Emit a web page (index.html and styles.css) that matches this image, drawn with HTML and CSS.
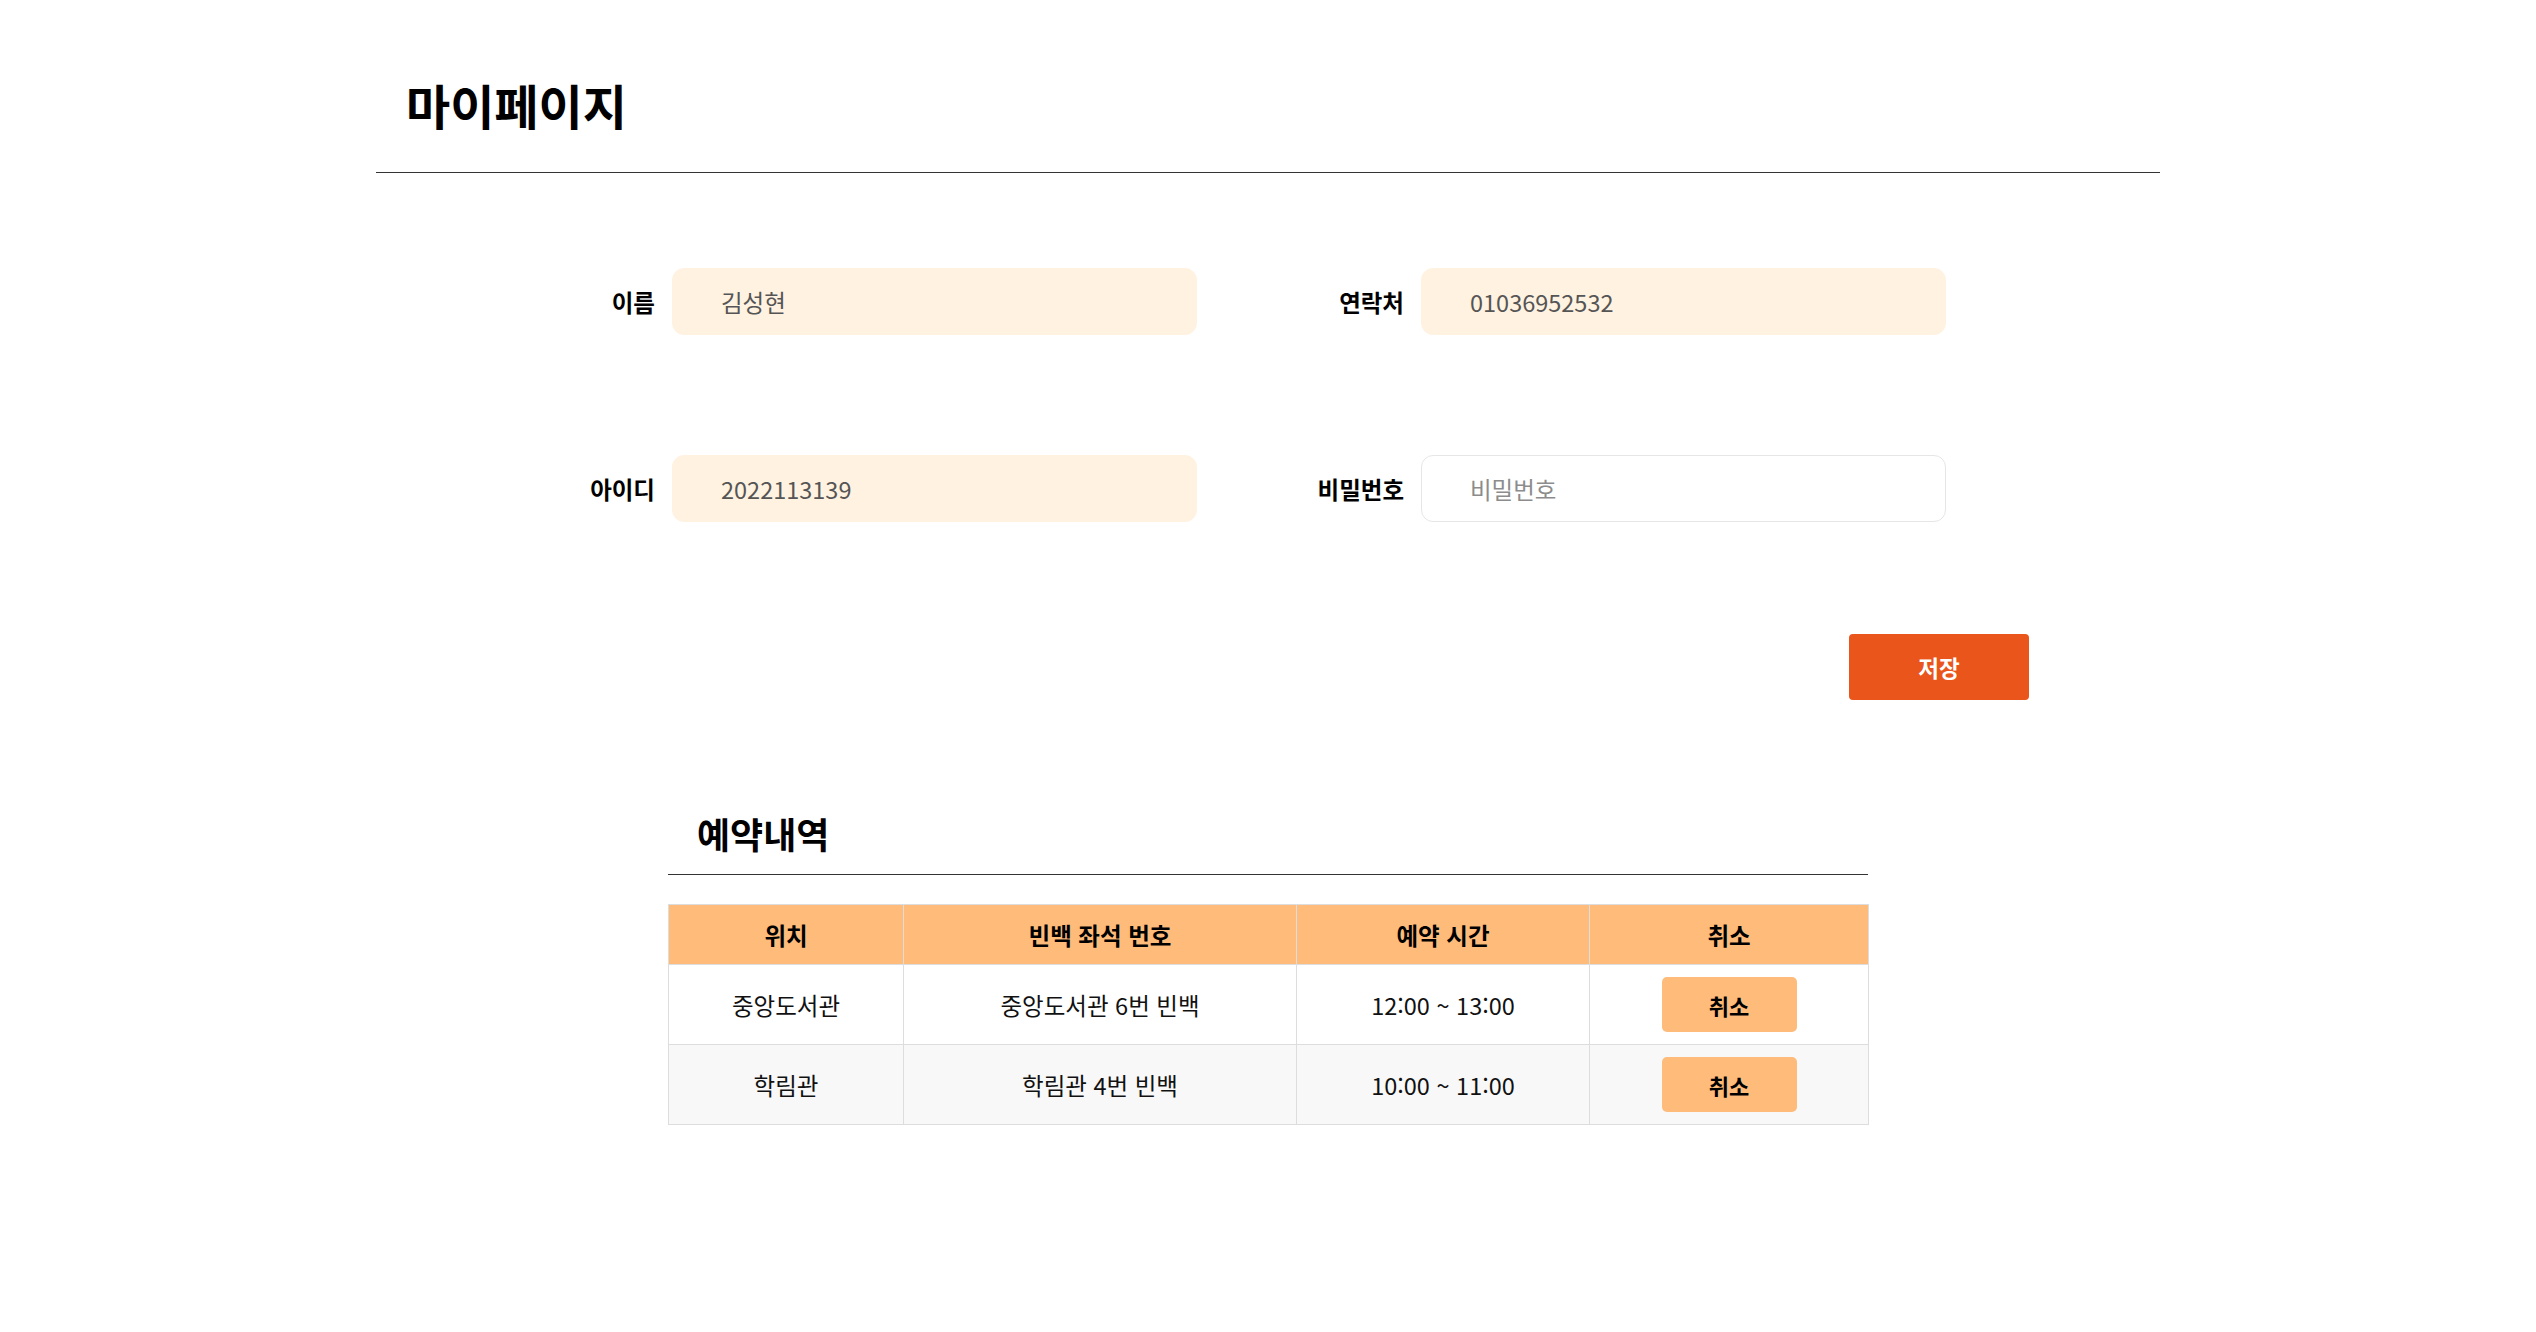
FILE: index.html
```html
<!DOCTYPE html>
<html lang="ko">
<head>
<meta charset="utf-8">
<title>마이페이지</title>
<link rel="stylesheet" href="styles.css">
</head>
<body>
<div class="page">
  <header class="page-header">
    <h1 class="page-title">마이페이지</h1>
  </header>

  <form class="profile-form">
    <div class="form-row">
      <div class="field">
        <label class="field-label">이름</label>
        <input class="field-input filled" type="text" value="김성현" readonly>
      </div>
      <div class="field">
        <label class="field-label">연락처</label>
        <input class="field-input filled" type="text" value="01036952532" readonly>
      </div>
    </div>
    <div class="form-row">
      <div class="field">
        <label class="field-label">아이디</label>
        <input class="field-input filled" type="text" value="2022113139" readonly>
      </div>
      <div class="field">
        <label class="field-label">비밀번호</label>
        <input class="field-input empty" type="password" placeholder="비밀번호">
      </div>
    </div>
    <div class="actions">
      <button class="save-btn" type="button">저장</button>
    </div>
  </form>

  <section class="reservations">
    <h2 class="section-title">예약내역</h2>
    <table class="res-table">
      <thead>
        <tr>
          <th class="col-place">위치</th>
          <th class="col-seat">빈백 좌석 번호</th>
          <th class="col-time">예약 시간</th>
          <th class="col-cancel">취소</th>
        </tr>
      </thead>
      <tbody>
        <tr>
          <td>중앙도서관</td>
          <td>중앙도서관 6번 빈백</td>
          <td>12:00 ~ 13:00</td>
          <td><button class="cancel-btn" type="button">취소</button></td>
        </tr>
        <tr class="alt">
          <td>학림관</td>
          <td>학림관 4번 빈백</td>
          <td>10:00 ~ 11:00</td>
          <td><button class="cancel-btn" type="button">취소</button></td>
        </tr>
      </tbody>
    </table>
  </section>
</div>
</body>
</html>
```

FILE: styles.css
```css
* {
  box-sizing: border-box;
}

html, body {
  margin: 0;
  padding: 0;
  background: #ffffff;
}

body {
  font-family: "Noto Sans CJK KR", "Noto Sans", sans-serif;
  color: #111111;
}

.page {
  width: 1784px;
  margin: 0 auto;
}

.page-header {
  padding: 74px 0 38px 30px;
  border-bottom: 1px solid #333333;
}

.page-title {
  margin: 0;
  font-size: 48px;
  line-height: 60px;
  font-weight: 700;
  color: #000000;
}

.profile-form {
  padding: 95px 0 0 176px;
}

.form-row {
  display: flex;
  gap: 104px;
  margin-bottom: 120px;
}

.form-row + .form-row {
  margin-bottom: 0;
}

.field {
  display: flex;
  align-items: center;
  gap: 17px;
}

.field-label {
  width: 103px;
  text-align: right;
  font-size: 23.5px;
  font-weight: 700;
  color: #000000;
}

.field-input {
  width: 525px;
  height: 67px;
  padding: 0 0 0 48px;
  border-radius: 12px;
  font-family: inherit;
  font-size: 23.5px;
  color: #555555;
  outline: none;
}

.field-input.filled {
  background: #fff2e1;
  border: 1px solid #fff2e1;
}

.field-input.empty {
  background: #ffffff;
  border: 1px solid #e6e6e6;
}

.field-input::placeholder {
  color: #8c8c8c;
}

.actions {
  display: flex;
  justify-content: flex-end;
  padding: 112px 131px 0 0;
}

.save-btn {
  width: 180px;
  height: 66px;
  border: none;
  border-radius: 4px;
  background: #e9551a;
  color: #ffffff;
  font-family: inherit;
  font-size: 22.5px;
  font-weight: 700;
}

.reservations {
  width: 1200px;
  margin: 110px auto 0;
}

.section-title {
  margin: 0;
  padding: 0 0 18px 29px;
  font-size: 36px;
  line-height: 46px;
  font-weight: 700;
  color: #000000;
  border-bottom: 1px solid #333333;
}

.res-table {
  width: 100%;
  margin-top: 29px;
  border-collapse: collapse;
  table-layout: fixed;
  font-size: 23.5px;
}

.res-table th,
.res-table td {
  border: 1px solid #dddddd;
  text-align: center;
  vertical-align: middle;
  padding: 0;
}

.res-table th {
  height: 60px;
  background: #ffbb7a;
  font-weight: 700;
  color: #000000;
}

.res-table td {
  height: 80px;
  color: #111111;
}

.res-table tr.alt td {
  background: #f8f8f8;
}

.col-place { width: 235px; }
.col-seat { width: 393px; }
.col-time { width: 293px; }
.col-cancel { width: 279px; }

.cancel-btn {
  width: 135px;
  height: 55px;
  border: none;
  border-radius: 5px;
  background: #ffbb7a;
  color: #000000;
  font-family: inherit;
  font-size: 22px;
  font-weight: 700;
  vertical-align: middle;
}
```
